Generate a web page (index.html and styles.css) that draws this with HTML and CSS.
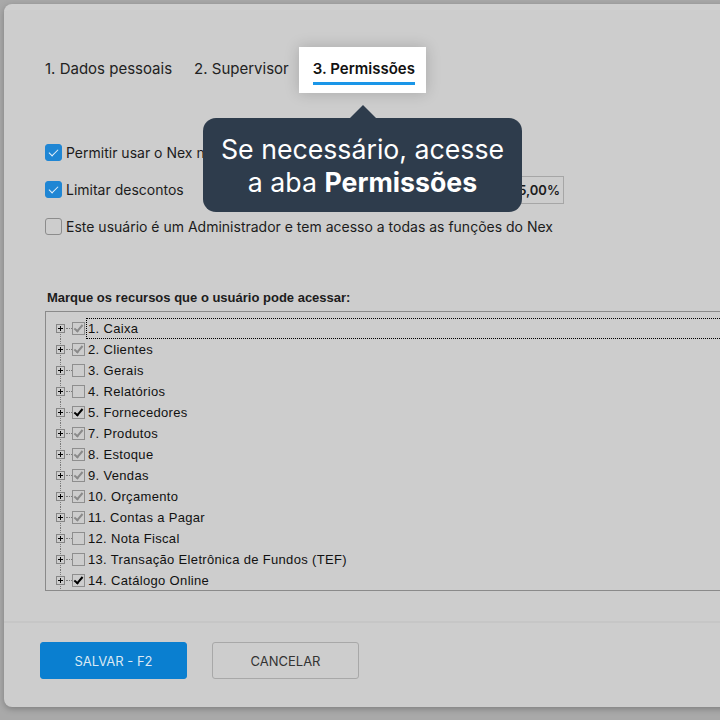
FILE: index.html
```html
<!DOCTYPE html>
<html lang="pt-BR">
<head>
    <meta charset="UTF-8">
    <meta name="viewport" content="width=device-width, initial-scale=1.0">
    <title>Cadastro de usuário</title>
    <link rel="stylesheet" href="styles.css">
</head>
<body>
    <div class="modal">
        <!-- Abas do cadastro -->
        <div class="tabs">
            <div class="tab">1. Dados pessoais</div>
            <div class="tab">2. Supervisor</div>
            <div class="tab active"><span>3. Permissões</span></div>
        </div>

        <!-- Dica sobre a aba -->
        <div class="tooltip">Se necessário, acesse<br>a aba <b>Permissões</b></div>

        <div class="options">
            <div class="option">
                <div class="check on"></div>
                <span>Permitir usar o Nex na web e no celular</span>
            </div>
            <div class="option">
                <div class="check on"></div>
                <span>Limitar descontos</span>
                <span class="limit-label">Desconto máximo</span>
                <div class="limit-input">5,00%</div>
            </div>
            <div class="option">
                <div class="check"></div>
                <span>Este usuário é um Administrador e tem acesso a todas as funções do Nex</span>
            </div>
        </div>

        <div class="resources">
            <div class="resources-title">Marque os recursos que o usuário pode acessar:</div>
            <div class="tree">
                <ul class="tree-list">
                    <li class="node"><i class="exp"></i><i class="box gray"></i><span class="lbl focus">1. Caixa</span></li>
                    <li class="node"><i class="exp"></i><i class="box gray"></i><span class="lbl">2. Clientes</span></li>
                    <li class="node"><i class="exp"></i><i class="box"></i><span class="lbl">3. Gerais</span></li>
                    <li class="node"><i class="exp"></i><i class="box"></i><span class="lbl">4. Relatórios</span></li>
                    <li class="node"><i class="exp"></i><i class="box black"></i><span class="lbl">5. Fornecedores</span></li>
                    <li class="node"><i class="exp"></i><i class="box gray"></i><span class="lbl">7. Produtos</span></li>
                    <li class="node"><i class="exp"></i><i class="box gray"></i><span class="lbl">8. Estoque</span></li>
                    <li class="node"><i class="exp"></i><i class="box gray"></i><span class="lbl">9. Vendas</span></li>
                    <li class="node"><i class="exp"></i><i class="box gray"></i><span class="lbl">10. Orçamento</span></li>
                    <li class="node"><i class="exp"></i><i class="box gray"></i><span class="lbl">11. Contas a Pagar</span></li>
                    <li class="node"><i class="exp"></i><i class="box"></i><span class="lbl">12. Nota Fiscal</span></li>
                    <li class="node"><i class="exp"></i><i class="box"></i><span class="lbl">13. Transação Eletrônica de Fundos (TEF)</span></li>
                    <li class="node"><i class="exp"></i><i class="box black"></i><span class="lbl">14. Catálogo Online</span></li>
                </ul>
            </div>
        </div>

        <!-- Rodapé com ações -->
        <div class="footer">
            <button class="btn primary">SALVAR - F2</button>
            <button class="btn">CANCELAR</button>
        </div>
    </div>
</body>
</html>
```

FILE: styles.css
```css
/* Página escurecida por trás do modal */
html, body {
    margin: 0;
    padding: 0;
    height: 100%;
    overflow: hidden;
}

body {
    background: #a9a9a9;
    font-family: Inter, "Noto Sans", sans-serif;
    color: #1c1c1c;
}

.modal {
    position: relative;
    margin: 4px 0 0 4px;
    width: 760px;
    height: 703px;
    background: #cdcdcd;
    border-radius: 8px;
    box-shadow: 0 2px 6px rgba(0, 0, 0, 0.25);
    box-sizing: border-box;
    border-top: 6px solid #d0d0d0;
    display: flex;
    flex-direction: column;
}

/* Abas */
.tabs {
    display: flex;
    gap: 22px;
    margin: 37px 0 0 41px;
    font-size: 15px;
    line-height: 20px;
}

.tab {
    padding: 12px 0 10px;
    color: #222;
}

.tab.active {
    background: #fff;
    padding: 12px 11px 8px 14px;
    margin: 0 -11px 0 -12px;
    font-weight: 600;
    color: #111;
    box-shadow: 0 0 14px rgba(0, 0, 0, 0.18);
}

.tab.active span {
    display: inline-block;
    border-bottom: 3px solid #1a96e8;
    padding-bottom: 3px;
}

/* Balão de dica */
.tooltip {
    position: absolute;
    left: 199px;
    top: 108px;
    width: 319px;
    height: 94px;
    box-sizing: border-box;
    padding-top: 15px;
    background: #2e3c4c;
    border-radius: 13px;
    color: #fff;
    font-size: 26.7px;
    line-height: 33px;
    text-align: center;
    z-index: 2;
}

.tooltip b {
    font-weight: 700;
}

.tooltip::before {
    content: "";
    position: absolute;
    left: 146px;
    top: -13px;
    border-left: 14px solid transparent;
    border-right: 14px solid transparent;
    border-bottom: 14px solid #2e3c4c;
}

/* Opções principais */
.options {
    margin: 51px 0 0 41px;
    display: flex;
    flex-direction: column;
    gap: 20px;
    font-size: 14px;
}

.option {
    display: flex;
    align-items: center;
    gap: 4px;
    height: 17px;
}

.check {
    width: 17px;
    height: 17px;
    box-sizing: border-box;
    border: 1px solid #8c8c8c;
    border-radius: 3px;
    position: relative;
    flex-shrink: 0;
}

.check.on {
    background: #1f86d4;
    border-color: #1f86d4;
}

.check.on::after {
    content: "";
    position: absolute;
    left: 5px;
    top: 2px;
    width: 4px;
    height: 8px;
    border: solid #e8f2fb;
    border-width: 0 1.5px 1.5px 0;
    transform: rotate(45deg);
}

.limit-label {
    margin-left: 21px;
    color: #8b3a12;
}

.limit-input {
    margin-left: auto;
    margin-right: 200px;
    width: 120px;
    height: 28px;
    box-sizing: border-box;
    border: 1px solid #a6a6a6;
    text-align: right;
    padding: 5px 3px 0 0;
    font-size: 13px;
    font-weight: 600;
}

/* Árvore de recursos */
.resources {
    margin: 55px 0 0 41px;
    font-family: "Liberation Sans", Arial, sans-serif;
}

.resources-title {
    font-size: 13px;
    font-weight: bold;
    margin-left: 2px;
    line-height: 16px;
}

.tree {
    margin-top: 5px;
    height: 280px;
    border: 1px solid #8a8a8a;
    border-right: none;
    box-sizing: border-box;
    overflow: hidden;
}

.tree-list {
    list-style: none;
    margin: 6px 0 0;
    padding: 0;
    font-size: 13px;
    letter-spacing: 0.33px;
    color: #111;
}

.node {
    height: 21px;
    display: flex;
    align-items: center;
    position: relative;
}

.node::before {
    content: "";
    position: absolute;
    left: 14px;
    top: 0;
    bottom: 0;
    border-left: 1px dotted #7a7a7a;
}

.node:first-child::before {
    top: 10px;
}

.exp {
    position: relative;
    z-index: 1;
    width: 9px;
    height: 9px;
    box-sizing: border-box;
    margin-left: 10px;
    border: 1px solid #858585;
    background: #cdcdcd;
}

.exp::before, .exp::after {
    content: "";
    position: absolute;
    background: #000;
}

.exp::before {
    left: 1px;
    top: 3px;
    width: 5px;
    height: 1px;
}

.exp::after {
    left: 3px;
    top: 1px;
    width: 1px;
    height: 5px;
}

.box {
    position: relative;
    width: 13px;
    height: 13px;
    box-sizing: border-box;
    border: 1px solid #8e8e8e;
    margin-left: 7px;
}

.exp + .box::before {
    content: "";
    position: absolute;
    left: -7px;
    top: 5px;
    width: 6px;
    border-top: 1px dotted #7a7a7a;
}

.box.gray::after, .box.black::after {
    content: "";
    position: absolute;
    left: 3px;
    top: 0px;
    width: 3px;
    height: 7px;
    border: solid #8a8a8a;
    border-width: 0 2px 2px 0;
    transform: rotate(40deg);
}

.box.black::after {
    border-color: #000;
}

.lbl {
    margin-left: 1px;
    padding: 0 1px;
    line-height: 19px;
    border: 1px solid transparent;
}

.lbl.focus {
    flex: 1;
    border: 1px dotted #000;
}

/* Rodapé */
.footer {
    margin-top: auto;
    height: 86px;
    display: flex;
    align-items: flex-start;
    gap: 25px;
    padding: 19px 0 0 36px;
    box-sizing: border-box;
    border-top: 2px solid #c6c6c6;
}

.btn {
    width: 147px;
    height: 37px;
    border-radius: 3px;
    border: 1px solid #a8a8a8;
    background: transparent;
    font-family: Inter, "Noto Sans", sans-serif;
    font-size: 13px;
    color: #333;
}

.btn.primary {
    background: #0a7fd0;
    border-color: #0a7fd0;
    color: #dbe9f4;
}
```
